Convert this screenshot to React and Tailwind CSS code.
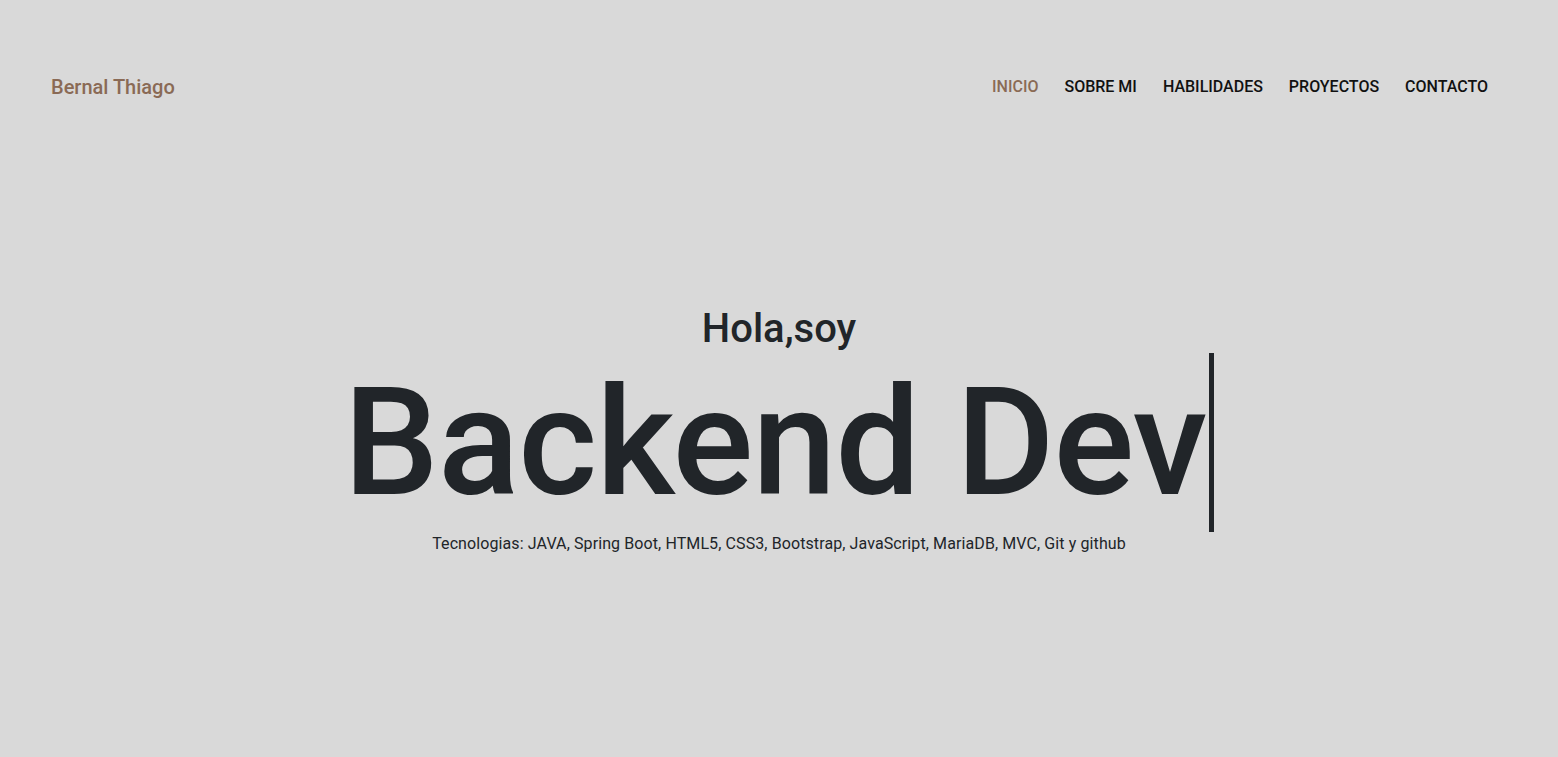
import React from "react";

const links = ["Inicio", "Sobre mi", "Habilidades", "Proyectos", "Contacto"];

export default function App() {
  return (
    <div className="min-h-screen w-full bg-[#d9d9d9] font-['Roboto',sans-serif] text-[#212529]">
      {/* Navbar */}
      <nav className="flex items-center justify-between px-[51px] pt-[72px]">
        <a className="text-[20px] font-medium text-[#8a6a55]">Bernal Thiago</a>
        <ul className="flex items-center gap-[26px] pr-[19px]">
          {links.map((l, i) => (
            <li
              key={l}
              className={
                "text-[16px] font-medium uppercase " +
                (i === 0 ? "text-[#8a6a55]" : "text-[#111]")
              }
            >
              {l}
            </li>
          ))}
        </ul>
      </nav>

      {/* Hero */}
      <section className="flex flex-col items-center pt-[203px]">
        <h2 className="text-[40px] font-medium leading-[48px]">Hola,soy</h2>
        <div className="flex items-start">
          <h1 className="text-[151px] font-medium leading-[180px] tracking-[-1px]">Backend Dev</h1>
          <span className="ml-[3px] h-[179px] w-[5px] bg-[#212529]" />
        </div>
        <p className="mt-[-1px] text-[16px] tracking-[0.1px]">
          Tecnologias: JAVA, Spring Boot, HTML5, CSS3, Bootstrap, JavaScript, MariaDB, MVC, Git y github
        </p>
      </section>
    </div>
  );
}
